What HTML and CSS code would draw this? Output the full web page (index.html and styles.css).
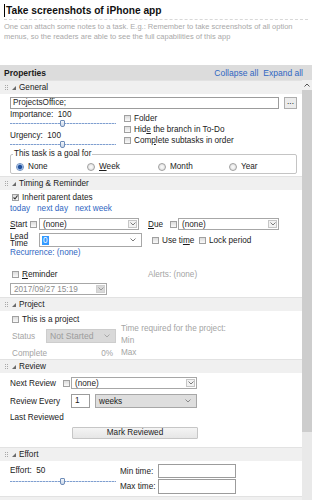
FILE: index.html
```html
<!DOCTYPE html>
<html lang="en">
<head>
  <meta charset="UTF-8">
  <title>Take screenshots of iPhone app</title>
  <link rel="stylesheet" href="styles.css">
</head>
<body>
<div class="task">
  <div class="task-title"><span class="caret"></span>Take screenshots of iPhone app</div>
  <div class="task-notes">One can attach some notes to a task. E.g.: Remember to take screenshots of all option menus, so the readers are able to see the full capabilities of this app</div>
</div>

<div class="props-bar">
  <strong>Properties</strong>
  <span class="props-links"><a href="#">Collapse all</a><a href="#">Expand all</a></span>
</div>

<div class="panel">
  <div class="sections">

    <div class="sec-head"><span class="grip"></span><span class="tri"></span>General</div>
    <div class="sec general">
      <div class="ctx-row">
        <div class="field">ProjectsOffice;</div>
        <div class="btn-dots">...</div>
      </div>
      <div class="cols">
        <div class="sliders">
          <div class="lbl">Importance:&nbsp; 100</div>
          <div class="slider"><span class="thumb"></span></div>
          <div class="lbl">Urgency:&nbsp; 100</div>
          <div class="slider"><span class="thumb"></span></div>
        </div>
        <div class="checks">
          <div class="chk"><span class="box"></span><span>Folder</span></div>
          <div class="chk"><span class="box"></span><span>Hid<u>e</u> the branch in To-Do</span></div>
          <div class="chk"><span class="box"></span><span>Com<u>p</u>lete subtasks in order</span></div>
        </div>
      </div>
      <fieldset class="goal">
        <legend>This task is a goal for</legend>
        <div class="radios">
          <div class="radio"><span class="rb on"></span><span>None</span></div>
          <div class="radio"><span class="rb"></span><span><u>W</u>eek</span></div>
          <div class="radio"><span class="rb"></span><span>Month</span></div>
          <div class="radio"><span class="rb"></span><span>Year</span></div>
        </div>
      </fieldset>
    </div>

    <div class="sec-head"><span class="grip"></span><span class="tri"></span>Timing &amp; Reminder</div>
    <div class="sec timing">
      <div class="chk inherit"><span class="box checked"><svg width="5" height="5" viewBox="0 0 5 5"><path d="M0.5 2.5 L2 4 L4.5 0.5" fill="none" stroke="#333" stroke-width="1.1"/></svg></span><span>Inherit parent dates</span></div>
      <div class="quick"><a href="#">today</a><a href="#">next day</a><a href="#">next week</a></div>
      <div class="dates">
        <span class="dl"><u>S</u>tart</span><span class="box"></span>
        <div class="select w-start"><span class="val">(none)</span><span class="dd"><svg width="6" height="4" viewBox="0 0 6 4"><path d="M0.5 0.5 L3 3 L5.5 0.5" fill="none" stroke="#7b7b7b"/></svg></span></div>
        <span class="dl due"><u>D</u>ue</span><span class="box"></span>
        <div class="select w-due"><span class="val">(none)</span><span class="dd"><svg width="6" height="4" viewBox="0 0 6 4"><path d="M0.5 0.5 L3 3 L5.5 0.5" fill="none" stroke="#7b7b7b"/></svg></span></div>
      </div>
      <div class="lead">
        <span class="lead-lbl">Lead<br>Time</span>
        <div class="select w-lead"><span class="val"><span class="hl">0</span></span><span class="chev"><svg width="6" height="4" viewBox="0 0 6 4"><path d="M0.5 0.5 L3 3 L5.5 0.5" fill="none" stroke="#7b7b7b"/></svg></span></div>
        <div class="chk use-time"><span class="box"></span><span>Use ti<u>m</u>e</span></div>
        <div class="chk"><span class="box"></span><span>Lock period</span></div>
      </div>
      <a class="recur" href="#">Recurrence: (none)</a>
      <div class="reminder">
        <div class="chk"><span class="box"></span><span><u>R</u>eminder</span></div>
        <span class="alerts">Alerts: (none)</span>
      </div>
      <div class="select w-date"><span class="val">2017/09/27 15:19</span><span class="dd grey"><svg width="6" height="4" viewBox="0 0 6 4"><path d="M0.5 0.5 L3 3 L5.5 0.5" fill="none" stroke="#9a9a9a"/></svg></span></div>
    </div>

    <div class="sec-head"><span class="grip"></span><span class="tri"></span>Project</div>
    <div class="sec project">
      <div class="chk proj-check"><span class="box"></span><span>This is a project</span></div>
      <div class="proj-grid">
        <div class="proj-left">
          <div class="proj-row">
            <span class="pl">Status</span>
            <div class="select w-status"><span class="val">Not Started</span><span class="chev"><svg width="6" height="4" viewBox="0 0 6 4"><path d="M0.5 0.5 L3 3 L5.5 0.5" fill="none" stroke="#a8a8a8"/></svg></span></div>
          </div>
          <div class="proj-row complete"><span>Complete</span><span>0%</span></div>
        </div>
        <div class="proj-right">
          <div>Time required for the project:</div>
          <div>Min</div>
          <div>Max</div>
        </div>
      </div>
    </div>

    <div class="sec-head"><span class="grip"></span><span class="tri"></span>Review</div>
    <div class="sec review">
      <div class="rv-row next">
        <span class="rl">Next Review</span><span class="box"></span>
        <div class="select w-next"><span class="val">(none)</span><span class="dd"><svg width="6" height="4" viewBox="0 0 6 4"><path d="M0.5 0.5 L3 3 L5.5 0.5" fill="none" stroke="#7b7b7b"/></svg></span></div>
      </div>
      <div class="rv-row every">
        <span class="rl">Review Every</span>
        <div class="field num">1</div>
        <div class="select w-weeks"><span class="val">weeks</span><span class="chev"><svg width="6" height="4" viewBox="0 0 6 4"><path d="M0.5 0.5 L3 3 L5.5 0.5" fill="none" stroke="#8a8a8a"/></svg></span></div>
      </div>
      <div class="rv-row last"><span class="rl">Last Reviewed</span></div>
      <div class="mark">Mark Reviewed</div>
    </div>

    <div class="sec-head"><span class="grip"></span><span class="tri"></span>Effort</div>
    <div class="sec effort">
      <div class="sliders">
        <div class="lbl">Effort:&nbsp; 50</div>
        <div class="slider"><span class="thumb"></span></div>
      </div>
      <div class="times">
        <div class="trow"><span class="tl">Min time:</span><div class="field w-time"></div></div>
        <div class="trow max"><span class="tl">Max time:</span><div class="field w-time"></div></div>
      </div>
    </div>

    <div class="sec-head"></div>
  </div>

  <div class="scroll">
    <div class="scroll-up"><svg width="6" height="4" viewBox="0 0 6 4"><path d="M0.5 3.5 L3 1 L5.5 3.5" fill="none" stroke="#555"/></svg></div>
    <div class="scroll-thumb"></div>
  </div>
</div>
</body>
</html>
```

FILE: styles.css
```css
* {
  box-sizing: border-box;
}
body {
  margin: 0;
  width: 312px;
  height: 500px;
  overflow: hidden;
  background: #fff;
  font-family: "Liberation Sans", Arial, sans-serif;
  font-size: 8.2px;
  color: #1b1b1b;
}
a {
  color: #2f66c2;
  text-decoration: none;
}

/* task header */
.task {
  height: 65px;
  padding: 4px 4px 0 4px;
}
.task-title {
  display: flex;
  align-items: center;
  height: 16px;
  padding-bottom: 2px;
  border-bottom: 1px dashed #d8d8d8;
  font-size: 10.2px;
  font-weight: bold;
  color: #111;
}
.caret {
  width: 1px;
  height: 13px;
  background: #000;
  margin-right: 1px;
}
.task-notes {
  padding-top: 2px;
  font-size: 7.5px;
  line-height: 10px;
  color: #a9a9a9;
}

.props-bar {
  display: flex;
  align-items: center;
  justify-content: space-between;
  height: 15px;
  padding: 0 9px 0 4px;
  background: #dcdcdc;
  font-size: 8.5px;
}
.props-links a {
  margin-left: 5px;
}

/* panel */
.panel {
  display: flex;
  height: 420px;
}
.sections {
  width: 302px;
  overflow: hidden;
}
.scroll {
  width: 10px;
  background: #e9e9e9;
}
.scroll-up {
  height: 10px;
  background: #f0f0f0;
  display: flex;
  align-items: center;
  justify-content: center;
}
.scroll-up svg {
  display: block;
}
.scroll-thumb {
  height: 342px;
  background: #cdcdcd;
}

.sec-head {
  display: flex;
  align-items: center;
  height: 14px;
  padding-left: 4px;
  background: #f0f0f0;
  border-top: 1px solid #e2e2e2;
}
.grip {
  width: 4px;
  height: 6px;
  margin-right: 4px;
  background: conic-gradient(#a8a8a8 25%, transparent 0) 0 0 / 2px 2px;
}
.tri {
  width: 0;
  height: 0;
  border-left: 4px solid transparent;
  border-bottom: 4px solid #6a6a6a;
  margin-right: 3px;
}
.sec {
  padding: 0 5px 0 10px;
  white-space: nowrap;
}

/* shared controls */
.chk {
  display: flex;
  align-items: center;
  height: 11px;
}
.box {
  flex: none;
  display: flex;
  align-items: center;
  justify-content: center;
  width: 7px;
  height: 7px;
  margin-right: 3px;
  border: 1px solid #a0a0a0;
  background: linear-gradient(#dcdcdc, #fafafa);
}
.box svg {
  display: block;
}
.field {
  height: 100%;
  padding-left: 2px;
  border: 1px solid #9c9c9c;
  background: #fff;
  line-height: 10px;
}
.select {
  display: flex;
  align-items: center;
  height: 100%;
  padding-left: 3px;
  border: 1px solid #a7a7a7;
  background: #fff;
}
.select .val {
  flex: 1;
}
.dd {
  display: flex;
  align-items: center;
  justify-content: center;
  width: 9px;
  height: calc(100% - 2px);
  margin-right: 1px;
  border: 1px solid #c6c6c6;
  background: #f2f2f2;
}
.dd.grey {
  background: #d9d9d9;
  border-color: #d0d0d0;
}
.chev {
  display: flex;
  margin-right: 5px;
}
.dd svg,
.chev svg {
  display: block;
}

.lbl {
  height: 10px;
  line-height: 10px;
}
.slider {
  position: relative;
  height: 6px;
}
.slider::before {
  content: "";
  position: absolute;
  left: 0;
  right: 0;
  top: 3px;
  height: 1px;
  background: repeating-linear-gradient(90deg, #7f9fd0 0 2px, #c6d4ea 2px 3px);
}
.slider + .lbl {
  margin-top: 5px;
}
.thumb {
  position: absolute;
  left: calc(50% - 3px);
  top: 0;
  width: 5px;
  height: 7px;
  border: 1px solid #6f8db8;
  border-radius: 1px 1px 2px 2px;
  background: linear-gradient(#f4f7fb, #c9d6e8);
}

/* general */
.ctx-row {
  display: flex;
  gap: 5px;
  height: 12px;
  margin-top: 3px;
}
.ctx-row .field {
  flex: 1;
}
.btn-dots {
  width: 13px;
  border: 1px solid #adadad;
  background: #ececec;
  text-align: center;
  line-height: 8px;
}
.cols {
  display: flex;
  height: 38px;
}
.sliders {
  width: 106px;
  padding-top: 1px;
}
.checks {
  margin-left: 8px;
  padding-top: 4px;
}
.goal {
  margin: 2px 0 0 0;
  padding: 0 4px 1px 5px;
  min-width: 0;
  border: 1px solid #c4c4c4;
  border-radius: 2px;
}
.goal legend {
  padding: 0 1px;
  margin-left: -3px;
  line-height: 10px;
}
.radios {
  display: grid;
  grid-template-columns: repeat(4, 71px);
  height: 11px;
  margin-top: 2px;
}
.radio {
  display: flex;
  align-items: center;
}
.rb {
  width: 8px;
  height: 8px;
  margin-right: 4px;
  border: 1px solid #a0a0a0;
  border-radius: 50%;
  background: radial-gradient(#fdfdfd, #d8d8d8);
}
.rb.on {
  border-color: #6e8fbf;
  background: radial-gradient(circle, #1f4f9a 0 1.6px, #5d8ad0 2.2px, #e6eef9 3px);
}
.general {
  padding-bottom: 2px;
}

/* timing */
.inherit {
  height: 10px;
  margin-top: 2px;
  padding-left: 2px;
}
.quick {
  height: 10px;
  margin-top: 2px;
  line-height: 10px;
}
.quick a {
  margin-right: 7px;
}
.dates {
  display: flex;
  align-items: center;
  height: 12px;
  margin-top: 4px;
}
.dl {
  width: 20px;
}
.dl.due {
  width: 22px;
  margin-left: 9px;
}
.dates .box {
  margin-right: 1px;
}
.w-start {
  width: 100px;
  margin-left: 1px;
}
.w-due {
  width: 101px;
}
.lead {
  display: flex;
  align-items: center;
  height: 14px;
  margin-top: 3px;
}
.lead-lbl {
  width: 29px;
  line-height: 7.5px;
}
.w-lead {
  width: 103px;
  margin-right: 10px;
  padding-left: 2px;
}
.hl {
  padding: 0 1px;
  background: #3399ff;
  color: #fff;
}
.use-time {
  width: 47px;
}
.recur {
  display: block;
  height: 10px;
  margin-top: 1px;
  line-height: 10px;
}
.reminder {
  display: flex;
  align-items: center;
  height: 10px;
  margin-top: 11px;
  padding-left: 2px;
}
.reminder .chk {
  width: 136px;
}
.alerts {
  color: #a4a4a4;
}
.w-date {
  width: 97px;
  height: 12px;
  margin-top: 4px;
  color: #8c8c8c;
}
.timing {
  padding-bottom: 2px;
}

/* project */
.proj-check {
  height: 10px;
  margin-top: 3px;
  padding-left: 2px;
}
.proj-grid {
  display: flex;
  margin-top: -1px;
  color: #a4a4a4;
}
.proj-left {
  width: 111px;
  padding: 6px 0 0 2px;
}
.proj-row {
  display: flex;
  align-items: center;
  height: 14px;
}
.pl {
  width: 34px;
}
.w-status {
  width: 70px;
  background: #d9d9d9;
  border-color: #cdcdcd;
  color: #9c9c9c;
  font-size: 8.6px;
}
.proj-row.complete {
  justify-content: space-between;
  width: 101px;
  height: 10px;
  margin-top: 5px;
}
.proj-right {
  line-height: 12px;
}

/* review */
.rv-row {
  display: flex;
  align-items: center;
}
.rl {
  width: 53px;
}
.rv-row.next {
  height: 12px;
  margin-top: 4px;
}
.rv-row.next .box {
  margin-right: 1px;
}
.w-next {
  width: 126px;
}
.rv-row.every {
  height: 14px;
  margin-top: 5px;
}
.every .rl {
  width: 61px;
}
.field.num {
  width: 19px;
  margin-right: 5px;
  padding-left: 3px;
  line-height: 12px;
}
.w-weeks {
  width: 102px;
  background: #dedede;
}
.rv-row.last {
  height: 10px;
  margin-top: 4px;
}
.mark {
  width: 126px;
  height: 12px;
  margin: 5px 0 0 62px;
  border: 1px solid #c6c6c6;
  border-radius: 1px;
  background: linear-gradient(#f4f4f4, #e6e6e6);
  text-align: center;
  line-height: 10px;
}
.review {
  padding-bottom: 8px;
}

/* effort */
.effort {
  display: flex;
  padding-bottom: 2px;
}
.effort .sliders {
  padding-top: 5px;
}
.effort .slider {
  margin-top: 2px;
}
.times {
  margin-left: 4px;
  padding-top: 3px;
}
.trow {
  display: flex;
  align-items: center;
  height: 14px;
}
.trow.max {
  height: 15px;
  margin-top: 1px;
}
.tl {
  width: 38px;
}
.w-time {
  width: 78px;
}
```
